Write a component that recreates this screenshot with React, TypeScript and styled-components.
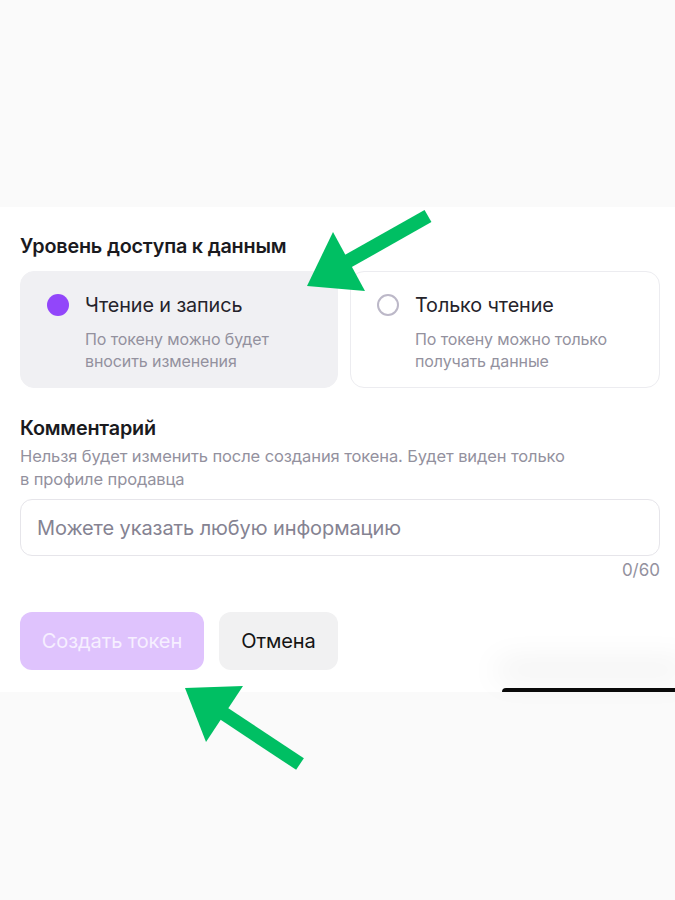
import styled, { createGlobalStyle } from "styled-components";

const GlobalStyle = createGlobalStyle`
  html, body {
    margin: 0;
    padding: 0;
    background: #fafafa;
  }
  body {
    font-family: Inter, "Noto Sans", "Liberation Sans", sans-serif;
    -webkit-font-smoothing: antialiased;
  }
  * {
    box-sizing: border-box;
  }
`;

type accessOption = {
  id: string;
  title: string;
  description: string[];
};

const accessOptions: accessOption[] = [
  {
    id: "rw",
    title: "Чтение и запись",
    description: ["По токену можно будет", "вносить изменения"],
  },
  {
    id: "ro",
    title: "Только чтение",
    description: ["По токену можно только", "получать данные"],
  },
];

const App = () => {
  const selected = "rw";

  return (
    <Page>
      <GlobalStyle />
      <TopSpacer />
      <Panel>
        <SectionTitle>Уровень доступа к данным</SectionTitle>
        <OptionsGrid>
          {accessOptions.map((option) => {
            const active = option.id === selected;
            return (
              <OptionCard key={option.id} active={active}>
                <Radio active={active} />
                <OptionText>
                  <OptionTitle>{option.title}</OptionTitle>
                  <OptionDescription>
                    {option.description[0]}
                    <br />
                    {option.description[1]}
                  </OptionDescription>
                </OptionText>
              </OptionCard>
            );
          })}
        </OptionsGrid>

        <CommentTitle>Комментарий</CommentTitle>
        <Hint>
          Нельзя будет изменить после создания токена. Будет виден только
          <br />в профиле продавца
        </Hint>
        <CommentInput placeholder="Можете указать любую информацию" />
        <Counter>0/60</Counter>

        <Actions>
          <PrimaryButton disabled>Создать токен</PrimaryButton>
          <SecondaryButton>Отмена</SecondaryButton>
        </Actions>
      </Panel>

      <FloatingBar />

      <ArrowLayer viewBox="0 0 675 900" width="675" height="900">
        <line
          x1="428"
          y1="216"
          x2="343"
          y2="264"
          stroke="#00bf63"
          strokeWidth="14"
        />
        <polygon points="307,286 333,232 365,291" fill="#00bf63" />
        <line
          x1="300"
          y1="764"
          x2="220"
          y2="711"
          stroke="#00bf63"
          strokeWidth="14"
        />
        <polygon points="185,688 243,686 206,742" fill="#00bf63" />
      </ArrowLayer>
    </Page>
  );
};

export default App;

const Page = styled.div`
  position: relative;
  width: 675px;
  height: 900px;
  overflow: hidden;
  background: #fafafa;
`;

const TopSpacer = styled.div`
  height: 207px;
`;

const Panel = styled.div`
  background: #ffffff;
  height: 485px;
  padding: 27px 15px 21px 20px;
  display: flex;
  flex-direction: column;
`;

const SectionTitle = styled.h2`
  margin: 0;
  font-size: 19.8px;
  line-height: 24px;
  font-weight: 600;
  color: #1a1a1e;
  letter-spacing: -0.2px;
`;

const OptionsGrid = styled.div`
  margin-top: 13px;
  display: grid;
  grid-template-columns: 318px 1fr;
  gap: 12px;
`;

const OptionCard = styled.div<{ active: boolean }>`
  height: 117px;
  display: flex;
  align-items: flex-start;
  gap: 16px;
  padding: 20px 12px 17px 26px;
  border-radius: 14px;
  background: ${({ active }) => (active ? "#f0f0f3" : "#ffffff")};
  border: 1px solid ${({ active }) => (active ? "#f0f0f3" : "#ececf0")};
`;

const Radio = styled.span<{ active: boolean }>`
  flex: none;
  width: 22px;
  height: 22px;
  margin-top: 2px;
  border-radius: 50%;
  background: ${({ active }) => (active ? "#9246fa" : "transparent")};
  border: ${({ active }) => (active ? "none" : "2px solid #bcb8c8")};
`;

const OptionText = styled.div`
  display: flex;
  flex-direction: column;
  gap: 10px;
`;

const OptionTitle = styled.div`
  font-size: 19.8px;
  line-height: 26px;
  color: #25232b;
  letter-spacing: -0.1px;
`;

const OptionDescription = styled.div`
  font-size: 16px;
  line-height: 22px;
  color: #93919e;
  letter-spacing: -0.1px;
`;

const CommentTitle = styled.h3`
  margin: 28px 0 0;
  font-size: 19.8px;
  line-height: 24px;
  font-weight: 600;
  color: #1a1a1e;
  letter-spacing: -0.2px;
`;

const Hint = styled.p`
  margin: 5px 0 0;
  font-size: 16.5px;
  line-height: 23px;
  color: #93919e;
  letter-spacing: -0.1px;
`;

const CommentInput = styled.input`
  margin-top: 8px;
  height: 57px;
  width: 100%;
  padding: 0 16px;
  border-radius: 12px;
  border: 1px solid #e6e5ea;
  background: #ffffff;
  font-family: inherit;
  font-size: 20px;
  color: #25232b;
  outline: none;
  letter-spacing: -0.1px;

  &::placeholder {
    color: #858392;
  }
`;

const Counter = styled.div`
  margin-top: 4px;
  text-align: right;
  font-size: 17px;
  line-height: 20px;
  color: #93919e;
`;

const Actions = styled.div`
  margin-top: 32px;
  display: flex;
  gap: 15px;
`;

const BaseButton = styled.button`
  height: 58px;
  border: none;
  border-radius: 12px;
  font-family: inherit;
  font-size: 20px;
  letter-spacing: -0.1px;
  cursor: pointer;
`;

const PrimaryButton = styled(BaseButton)`
  width: 184px;
  background: #dfc3fd;
  color: #f6efff;

  &:disabled {
    cursor: default;
  }
`;

const SecondaryButton = styled(BaseButton)`
  width: 119px;
  background: #f1f1f2;
  color: #141414;
`;

const FloatingBar = styled.div`
  position: absolute;
  left: 502px;
  top: 688px;
  width: 180px;
  height: 4px;
  background: #0a0a0a;
  border-top-left-radius: 4px;
  box-shadow: 0 -20px 32px 6px rgba(0, 0, 0, 0.08);
`;

const ArrowLayer = styled.svg`
  position: absolute;
  left: 0;
  top: 0;
  pointer-events: none;
`;
